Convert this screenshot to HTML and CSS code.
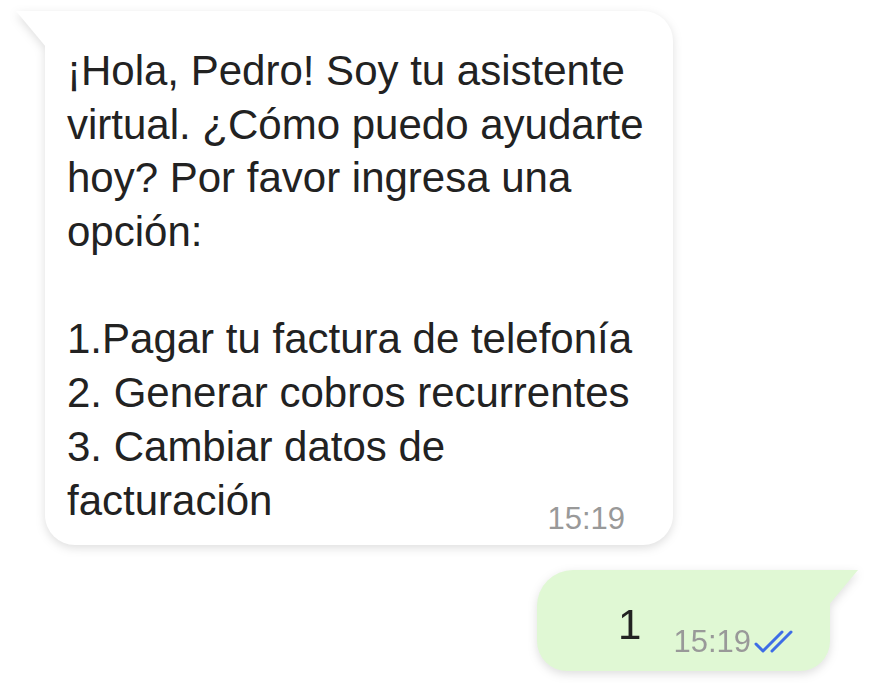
FILE: index.html
```html
<!DOCTYPE html>
<html lang="es">
<head>
<meta charset="utf-8">
<link rel="stylesheet" href="styles.css">
</head>
<body>
<div class="chat">
  <div class="bubble in">
    <div class="text">
      <p class="line">¡Hola, Pedro! Soy tu asistente</p>
      <p class="line">virtual. ¿Cómo puedo ayudarte</p>
      <p class="line">hoy? Por favor ingresa una</p>
      <p class="line">opción:</p>
      <p class="line blank"></p>
      <p class="line">1.Pagar tu factura de telefonía</p>
      <p class="line">2. Generar cobros recurrentes</p>
      <p class="line">3. Cambiar datos de</p>
      <p class="line last"><span>facturación</span><span class="meta">15:19</span></p>
    </div>
  </div>
  <div class="bubble out">
    <span class="text">1</span>
    <span class="meta">15:19
      <svg class="ticks" width="40" height="26" viewBox="0 0 40 26"><path d="M2 15 L9 22 L28 3 M18 22 L37 3" fill="none" stroke="#3d6de6" stroke-width="3" stroke-linecap="round" stroke-linejoin="round"/></svg>
    </span>
  </div>
</div>
</body>
</html>
```

FILE: styles.css
```css
html, body {
  margin: 0;
  padding: 0;
  background: #ffffff;
}
.chat {
  width: 876px;
  height: 696px;
  padding-top: 11px;
  box-sizing: border-box;
  display: flex;
  flex-direction: column;
  font-family: "Liberation Sans", Arial, sans-serif;
  color: #222;
}
.bubble {
  position: relative;
  filter: drop-shadow(0 3px 5px rgba(0, 0, 0, 0.13));
}
.bubble::before {
  content: "";
  position: absolute;
  top: 0;
  width: 30px;
  height: 36px;
}
.in {
  margin-left: 45px;
  width: 628px;
  height: 534px;
  box-sizing: border-box;
  background: #ffffff;
  border-radius: 0 30px 30px 30px;
  padding: 33px 10px 0 22px;
}
.in::before {
  left: -29px;
  background: #ffffff;
  clip-path: polygon(0 0, 100% 0, 100% 100%);
}
.in .text {
  font-size: 42px;
  line-height: 53.7px;
  color: #222;
}
.line {
  margin: 0;
  height: 53.7px;
}
.line.last {
  display: flex;
  align-items: flex-start;
  justify-content: space-between;
}
.in .meta {
  font-size: 31px;
  line-height: 31px;
  margin-top: 29px;
  margin-right: 38px;
  color: #999;
}
.out {
  margin-top: 25px;
  margin-left: 537px;
  width: 293px;
  height: 101px;
  box-sizing: border-box;
  background: #e0f8d4;
  border-radius: 36px 0 30px 30px;
  display: flex;
  align-items: flex-end;
  justify-content: flex-end;
  padding: 0 36px 14px 0;
  gap: 32px;
}
.out::before {
  right: -28px;
  background: #e0f8d4;
  clip-path: polygon(0 0, 100% 0, 0 100%);
}
.out .text {
  font-size: 42px;
  line-height: 44px;
  margin-bottom: 10px;
  color: #222;
}
.out .meta {
  font-size: 31px;
  color: #999;
  display: flex;
  align-items: center;
  gap: 3px;
  line-height: 30px;
}
.ticks {
  display: block;
}
```
